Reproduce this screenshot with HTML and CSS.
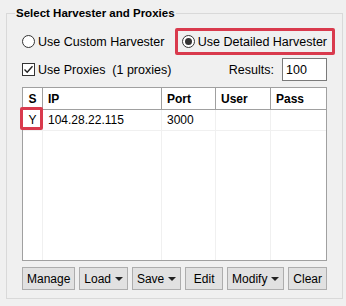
FILE: index.html
```html
<!DOCTYPE html>
<html lang="en">
<head>
    <meta charset="UTF-8">
    <meta name="viewport" content="width=device-width, initial-scale=1.0">
    <link rel="stylesheet" href="styles.css">
</head>
<body>

    <fieldset class="group">
        <legend>Select Harvester and Proxies</legend>

        <div class="row mode-row">
            <label class="opt"><span class="radio"></span>Use Custom Harvester</label>
            <label class="opt mark"><span class="radio on"></span>Use Detailed Harvester</label>
        </div>

        <div class="row proxy-row">
            <label class="opt">
                <span class="check">
                    <svg width="11" height="11" viewBox="0 0 11 11"><path d="M1.5 5.5 L4.2 8.2 L9.5 2.2" fill="none" stroke="#222" stroke-width="1.4"/></svg>
                </span>Use Proxies&nbsp; (1 proxies)
            </label>
            <div class="results">
                <span>Results:</span>
                <input type="text" class="num" value="100">
            </div>
        </div>

        <div class="grid">
            <table>
                <thead>
                    <tr>
                        <th class="c-s">S</th>
                        <th class="c-ip">IP</th>
                        <th class="c-port">Port</th>
                        <th class="c-user">User</th>
                        <th class="c-pass">Pass</th>
                    </tr>
                </thead>
                <tbody>
                    <tr class="item">
                        <td class="c-s flag">Y</td>
                        <td>104.28.22.115</td>
                        <td>3000</td>
                        <td></td>
                        <td></td>
                    </tr>
                    <tr class="filler">
                        <td></td><td></td><td></td><td></td><td></td>
                    </tr>
                </tbody>
            </table>
        </div>

        <div class="buttons">
            <button class="btn">Manage</button>
            <button class="btn">Load <i class="caret"></i></button>
            <button class="btn">Save <i class="caret"></i></button>
            <button class="btn">Edit</button>
            <button class="btn">Modify <i class="caret"></i></button>
            <button class="btn">Clear</button>
        </div>
    </fieldset>

</body>
</html>
```

FILE: styles.css
```css
body {
    font-family: "Liberation Sans", Arial, sans-serif;
    font-size: 12.5px;
    color: #000;
    background-color: #f0f0f0;
    margin: 0;
    width: 346px;
    height: 306px;
    overflow: hidden;
}
.group {
    box-sizing: border-box;
    width: 337px;
    height: 294px;
    margin: 5px 0 0 6px;
    padding: 7px 15px 0 15px;
    border: 1px solid #d9d9d9;
    display: flex;
    flex-direction: column;
}
.group legend {
    font-weight: bold;
    font-size: 11.5px;
    line-height: 16px;
    padding: 0 1px;
    margin-left: -7px;
}
.row {
    display: flex;
    align-items: center;
    justify-content: space-between;
}
.mode-row {
    height: 27px;
}
.proxy-row {
    height: 23px;
    margin-top: 3px;
}
.opt {
    display: flex;
    align-items: center;
    white-space: nowrap;
}
.mark {
    box-sizing: border-box;
    height: 27px;
    padding: 0 5px 0 4px;
    margin-right: -8px;
    border: 3px solid #d93a4d;
    border-radius: 2px;
}
.radio {
    box-sizing: border-box;
    width: 13px;
    height: 13px;
    margin-right: 3px;
    border: 1px solid #333;
    border-radius: 50%;
    background: #fff;
    display: flex;
    align-items: center;
    justify-content: center;
}
.radio.on::before {
    content: "";
    width: 7px;
    height: 7px;
    border-radius: 50%;
    background: #333;
}
.check {
    box-sizing: border-box;
    width: 13px;
    height: 13px;
    margin-right: 3px;
    border: 1px solid #333;
    background: #fff;
    display: flex;
    align-items: center;
    justify-content: center;
}
.results {
    display: flex;
    align-items: center;
}
.results span {
    margin-right: 8px;
}
.num {
    box-sizing: border-box;
    width: 45px;
    height: 23px;
    padding: 0 3px;
    border: 1px solid #7a7a7a;
    border-radius: 0;
    font: inherit;
    font-size: 12.5px;
    outline: none;
}
.grid {
    box-sizing: border-box;
    height: 174px;
    margin-top: 6px;
    border: 1px solid #a0a0a0;
    background: #fff;
}
.grid table {
    width: 100%;
    height: 100%;
    table-layout: fixed;
    border-collapse: separate;
    border-spacing: 0;
    font-size: 12px;
}
.grid th, .grid td {
    box-sizing: border-box;
    padding: 0 5px;
    text-align: left;
    border-right: 1px solid #f0f0f0;
    white-space: nowrap;
}
.grid th {
    height: 22px;
    font-weight: bold;
    border-right-color: #a0a0a0;
    border-bottom: 1px solid #a0a0a0;
}
.grid th:last-child, .grid td:last-child {
    border-right: none;
}
.grid .item td {
    height: 21px;
    border-bottom: 1px solid #f0f0f0;
}
.grid .c-s {
    width: 20px;
    padding: 0;
    text-align: center;
}
.c-ip { width: 119px; }
.c-port { width: 54px; }
.c-user { width: 55px; }
.flag {
    position: relative;
}
.flag::after {
    content: "";
    position: absolute;
    top: -3px;
    left: -3px;
    right: -1px;
    bottom: 0;
    border: 3px solid #d93a4d;
    border-radius: 2px;
}
.buttons {
    display: flex;
    justify-content: space-between;
    margin-top: 6px;
}
.btn {
    box-sizing: border-box;
    min-width: 38px;
    height: 23px;
    padding: 0 4px;
    border: 1px solid #adadad;
    border-radius: 0;
    background-color: #e1e1e1;
    font-family: "Liberation Sans", Arial, sans-serif;
    font-size: 12px;
    color: #000;
    display: flex;
    align-items: center;
    justify-content: center;
}
.caret {
    display: inline-block;
    width: 0;
    height: 0;
    margin-left: 4px;
    border-left: 4px solid transparent;
    border-right: 4px solid transparent;
    border-top: 4px solid #222;
}
```
